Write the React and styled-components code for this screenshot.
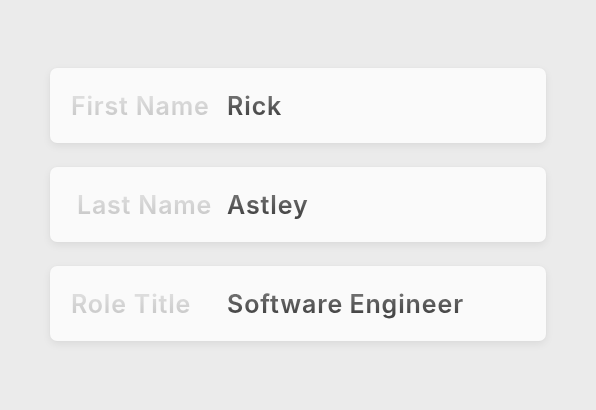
import React from 'react'
import styled, { createGlobalStyle } from 'styled-components'

const GlobalStyle = createGlobalStyle`
    html, body {
        margin: 0;
        padding: 0;
        background: #ebebeb;
    }
    body {
        font-family: Inter, "Noto Sans", sans-serif;
    }
`

const Page = styled.div`
    width: 596px;
    height: 410px;
    box-sizing: border-box;
    padding: 68px 50px 0 50px;
    display: flex;
    flex-direction: column;
    gap: 24px;
`

const Field = styled.div`
    height: 75px;
    background: #fafafa;
    border-radius: 7px;
    box-shadow: 0 3px 8px rgba(0, 0, 0, 0.07), 0 0 2px rgba(0, 0, 0, 0.04);
    display: flex;
    align-items: center;
    padding-left: 21px;
`

const Text = styled.span`
    font-size: 25px;
    font-weight: 600;
    line-height: 30px;
    white-space: nowrap;
    -webkit-background-clip: text;
    background-clip: text;
    color: transparent;
`

const Label = styled(Text)`
    width: 156px;
    box-sizing: border-box;
    padding-left: ${p => p.$indent || 0}px;
    letter-spacing: 0.8px;
    background-image: linear-gradient(180deg, #dddddd 20%, #cbcbcb 80%);
`

const Value = styled(Text)`
    letter-spacing: 0.9px;
    word-spacing: -1px;
    background-image: linear-gradient(180deg, #6e6e6e 20%, #464646 80%);
`

const fields = [
    { label: 'First Name', value: 'Rick', indent: 0 },
    { label: 'Last Name', value: 'Astley', indent: 6 },
    { label: 'Role Title', value: 'Software Engineer', indent: 0 },
]

export default function App() {
    return (
        <>
            <GlobalStyle />
            <Page>
                {fields.map((f, i) => (
                    <Field key={i}>
                        <Label $indent={f.indent}>{f.label}</Label>
                        <Value>{f.value}</Value>
                    </Field>
                ))}
            </Page>
        </>
    )
}
